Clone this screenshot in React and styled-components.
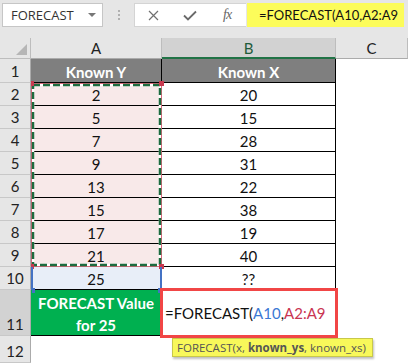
import { Fragment } from "react";
import styled, { createGlobalStyle } from "styled-components";

const GlobalStyle = createGlobalStyle`
  html, body {
    margin: 0;
    padding: 0;
  }
  body {
    background: #e6e6e6;
    font-family: Lato, "Liberation Sans", sans-serif;
  }
`;

const Page = styled.div`
  width: 408px;
  height: 363px;
  overflow: hidden;
  background: #e6e6e6;
`;

const Toolbar = styled.div`
  display: flex;
  align-items: center;
  height: 30px;
  padding-left: 2px;
  box-sizing: border-box;
`;

const NameBox = styled.div`
  display: flex;
  align-items: center;
  justify-content: space-between;
  width: 101px;
  height: 24px;
  box-sizing: border-box;
  padding: 0 6px 0 8px;
  background: #fff;
  border: 1px solid #c6c6c6;
  font-family: "Open Sans", "Noto Sans", sans-serif;
  font-size: 13px;
  color: #333;
`;

const Caret = styled.span`
  width: 0;
  height: 0;
  border-left: 4px solid transparent;
  border-right: 4px solid transparent;
  border-top: 4px solid #777;
`;

const Grip = styled.div`
  display: flex;
  flex-direction: column;
  align-items: center;
  justify-content: center;
  gap: 2px;
  width: 31px;
  height: 24px;
`;

const Dot = styled.span`
  width: 2px;
  height: 2px;
  background: #b0b0b0;
`;

const ToolBox = styled.div`
  display: flex;
  align-items: center;
  width: 112px;
  height: 24px;
  box-sizing: border-box;
  padding-left: 13px;
  gap: 24px;
  background: #fff;
  border: 1px solid #d4d4d4;
  border-right: none;
`;

const Fx = styled.span`
  font-family: "Liberation Serif", serif;
  font-style: italic;
  font-size: 14px;
  color: #666;
  margin-left: 2px;
  letter-spacing: -1px;
`;

const FormulaInput = styled.div`
  display: flex;
  align-items: center;
  width: 157px;
  height: 24px;
  margin-left: 1px;
  box-sizing: border-box;
  padding-left: 12px;
  background: #fcfc5a;
  font-size: 13px;
  color: #111;
  white-space: nowrap;
`;

const Sheet = styled.div`
  position: relative;
  margin-top: 8px;
  display: grid;
  grid-template-columns: 31px 131px 174px 72px;
  grid-template-rows: 21px 24px repeat(9, 23px) 46px 27px;
  font-size: 15px;
`;

const Corner = styled.div`
  position: relative;
  background: #e6e6e6;
  border-right: 1px solid #bdbdbd;
  border-bottom: 1px solid #bdbdbd;
  box-sizing: border-box;
`;

const ColHead = styled.div`
  display: flex;
  align-items: center;
  justify-content: center;
  box-sizing: border-box;
  background: ${(p) => (p.$active ? "#d2d2d2" : "#e6e6e6")};
  border-right: 1px solid #bdbdbd;
  border-bottom: ${(p) => (p.$active ? "2px solid #217346" : "1px solid #ababab")};
  color: ${(p) => (p.$active ? "#1e5b3a" : "#222")};
`;

const RowHead = styled.div`
  display: flex;
  align-items: flex-end;
  justify-content: center;
  padding-bottom: 2px;
  box-sizing: border-box;
  background: ${(p) => (p.$active ? "#d2d2d2" : "#e6e6e6")};
  border-right: 1px solid #ababab;
  border-bottom: 1px solid #c8c8c8;
  color: #222;
`;

const Cell = styled.div`
  display: flex;
  flex-direction: column;
  align-items: center;
  justify-content: center;
  padding-top: 2px;
  box-sizing: border-box;
  background: ${(p) => p.$bg || "#fff"};
  border-right: 1px solid ${(p) => (p.$open ? "transparent" : "#000")};
  border-bottom: 1px solid ${(p) => (p.$open ? "transparent" : "#000")};
  color: ${(p) => p.$color || "#111"};
  font-weight: ${(p) => (p.$bold ? 700 : 400)};
  line-height: 22px;
  white-space: nowrap;
`;

const EditCell = styled(Cell)`
  align-items: flex-start;
  padding: 0 0 0 3px;
  outline: 3px solid #f14646;
  outline-offset: -1px;
  z-index: 2;
`;

const Ref = styled.span`
  color: ${(p) => p.$color};
`;

const RangeBox = styled.div`
  position: absolute;
  left: 31px;
  top: 45px;
  width: 131px;
  height: 184px;
  box-sizing: border-box;
  border: 1px solid #c8394f;
  pointer-events: none;
`;

const RefBox = styled.div`
  position: absolute;
  left: 31px;
  top: 229px;
  width: 131px;
  height: 23px;
  box-sizing: border-box;
  border-left: 2px solid #4472c4;
  border-right: 2px solid #4472c4;
  pointer-events: none;
`;

const Handle = styled.span`
  position: absolute;
  width: ${(p) => (p.$left ? "3px" : "5px")};
  height: 5px;
  background: ${(p) => p.$color};
  ${(p) => (p.$left ? "left: -1px;" : "right: -3px;")}
  ${(p) => (p.$top ? "top: -3px;" : "bottom: -3px;")}
`;

const Ants = styled.svg`
  position: absolute;
  left: -1px;
  top: -1px;
`;

const Tip = styled.div`
  position: absolute;
  left: 172px;
  top: 300px;
  height: 17px;
  padding: 0 6px 0 4px;
  display: flex;
  align-items: center;
  background: #f8f85a;
  border: 1px solid #c8c84a;
  box-shadow: 1px 2px 2px rgba(0, 0, 0, 0.25);
  font-family: "Open Sans", "Noto Sans", sans-serif;
  font-size: 11.5px;
  color: #555;
  white-space: nowrap;
  z-index: 3;
`;

const knownY = [2, 5, 7, 9, 13, 15, 17, 21];
const knownX = [20, 15, 28, 31, 22, 38, 19, 40];

function CloseIcon() {
  return (
    <svg width="11" height="11" viewBox="0 0 11 11">
      <path d="M1 1 L10 10 M10 1 L1 10" stroke="#707070" strokeWidth="1.2" fill="none" />
    </svg>
  );
}

function CheckIcon() {
  return (
    <svg width="14" height="11" viewBox="0 0 14 11">
      <path d="M1 5.5 L5 9.5 L13 1.5" stroke="#6a6a6a" strokeWidth="1.8" fill="none" />
    </svg>
  );
}

function App() {
  return (
    <Page>
      <GlobalStyle />
      <Toolbar>
        <NameBox>
          FORECAST
          <Caret />
        </NameBox>
        <Grip>
          <Dot />
          <Dot />
          <Dot />
        </Grip>
        <ToolBox>
          <CloseIcon />
          <CheckIcon />
          <Fx>fx</Fx>
        </ToolBox>
        <FormulaInput>=FORECAST(A10,A2:A9</FormulaInput>
      </Toolbar>

      <Sheet>
        <Corner>
          <svg
            width="11"
            height="11"
            viewBox="0 0 11 11"
            style={{ position: "absolute", right: 3, bottom: 3 }}
          >
            <polygon points="11,0 11,11 0,11" fill="#b6b6b6" />
          </svg>
        </Corner>
        <ColHead>A</ColHead>
        <ColHead $active>B</ColHead>
        <ColHead>C</ColHead>

        <RowHead>1</RowHead>
        <Cell $bg="#7f7f7f" $color="#fff" $bold>Known Y</Cell>
        <Cell $bg="#7f7f7f" $color="#fff" $bold>Known X</Cell>
        <Cell $open />

        {knownY.map((y, i) => (
          <Fragment key={i}>
            <RowHead>{i + 2}</RowHead>
            <Cell $bg="#f8e9e9">{y}</Cell>
            <Cell>{knownX[i]}</Cell>
            <Cell $open />
          </Fragment>
        ))}

        <RowHead>10</RowHead>
        <Cell $bg="#e8eef8">25</Cell>
        <Cell>??</Cell>
        <Cell $open />

        <RowHead $active>11</RowHead>
        <Cell $bg="#00b050" $color="#fff" $bold>
          <span>FORECAST Value</span>
          <span>for 25</span>
        </Cell>
        <EditCell>
          <span>
            =FORECAST(<Ref $color="#3b78d4">A10</Ref>,<Ref $color="#c93552">A2:A9</Ref>
          </span>
        </EditCell>
        <Cell $open />

        <RowHead>12</RowHead>
        <Cell $open />
        <Cell $open />
        <Cell $open />

        <RangeBox>
          <Ants width="131" height="184">
            <rect x="2" y="2" width="127" height="180" fill="none" stroke="#fff" strokeWidth="2.5" />
            <rect
              x="2"
              y="2"
              width="127"
              height="180"
              fill="none"
              stroke="#1d6b3f"
              strokeWidth="2.5"
              strokeDasharray="7 3"
            />
          </Ants>
          <Handle $color="#c8394f" $left $top />
          <Handle $color="#c8394f" $top />
          <Handle $color="#c8394f" $left />
          <Handle $color="#c8394f" />
        </RangeBox>

        <RefBox>
          <Handle $color="#4472c4" $left />
          <Handle $color="#4472c4" />
        </RefBox>

        <Tip>
          FORECAST(x,&nbsp;<b>known_ys</b>, known_xs)
        </Tip>
      </Sheet>
    </Page>
  );
}

export default App;
